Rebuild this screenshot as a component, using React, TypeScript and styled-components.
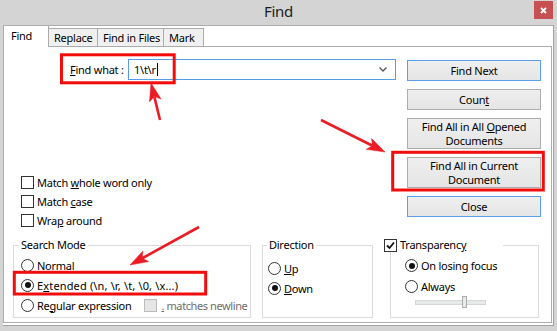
import React from 'react';
import styled, { createGlobalStyle } from 'styled-components';

const GlobalStyle = createGlobalStyle`
    html, body {
        margin: 0;
        padding: 0;
        background: #fff;
    }
    body {
        font-family: "Noto Sans", "Liberation Sans", sans-serif;
        font-size: 11px;
        letter-spacing: -0.25px;
        color: #000;
    }
`;

const Window = styled.div`
    position: relative;
    width: 557px;
    height: 331px;
    box-sizing: border-box;
    padding: 0 3px 5px 3px;
    background: #d4d4d4;
    display: flex;
    flex-direction: column;
    overflow: hidden;
`;

const TitleBar = styled.div`
    height: 25px;
    flex: none;
    display: grid;
    grid-template-columns: 1fr auto 1fr;
`;

const Title = styled.div`
    grid-column: 2;
    margin-top: 2px;
    font-size: 15px;
    line-height: 18px;
    letter-spacing: -0.3px;
    color: #1b1b1b;
`;

const CloseBox = styled.div`
    grid-column: 3;
    justify-self: end;
    margin: 1px 1px 0 0;
    width: 19px;
    height: 18px;
    background: #c75050;
    display: flex;
    align-items: center;
    justify-content: center;
`;

const Client = styled.div`
    flex: 1;
    background: #fff;
    border-top: 1px solid #acacac;
    border-right: 1px solid #a3a3a3;
    border-bottom: 1px solid #a3a3a3;
    padding: 0 1px 2px 0;
    display: flex;
    flex-direction: column;
`;

const TabRow = styled.div`
    height: 20px;
    flex: none;
    display: flex;
    align-items: flex-end;
`;

const Tab = styled.div<{ $active?: boolean; $w: number }>`
    box-sizing: border-box;
    width: ${p => p.$w}px;
    margin-left: ${p => p.$active ? 0 : -1}px;
    height: ${p => p.$active ? 21 : 18}px;
    margin-bottom: ${p => p.$active ? -1 : 0}px;
    padding: 0 0 ${p => p.$active ? 3 : 0}px ${p => p.$active ? 7 : 5}px;
    position: relative;
    z-index: ${p => p.$active ? 2 : 1};
    background: ${p => p.$active ? '#fff' : '#f0f0f0'};
    border: 1px solid #acacac;
    border-top: ${p => p.$active ? 'none' : '1px solid #acacac'};
    border-bottom: none;
    display: flex;
    align-items: center;
    white-space: nowrap;
`;

const Pane = styled.div`
    flex: 1;
    border: 1px solid #acacac;
    display: flex;
    flex-direction: column;
`;

const TopSection = styled.div`
    height: 191px;
    flex: none;
    display: flex;
    justify-content: space-between;
`;

const LeftCol = styled.div`
    display: flex;
    flex-direction: column;
    padding-top: 12px;
`;

const FindRow = styled.div`
    margin-left: 66px;
    display: grid;
    grid-template-columns: 58px 268px;
    align-items: center;
`;

const Combo = styled.div`
    box-sizing: border-box;
    height: 21px;
    border: 1px solid #569de5;
    padding: 0 5px 0 5px;
    display: flex;
    align-items: center;
`;

const Caret = styled.span`
    width: 1px;
    height: 13px;
    margin-left: 1px;
    background: #000;
`;

const Chevron = styled.svg`
    margin-left: auto;
    margin-right: 3px;
`;

const Options = styled.div`
    margin: 93px 0 0 17px;
    display: flex;
    flex-direction: column;
`;

const OptionRow = styled.div<{ $h?: number }>`
    height: ${p => p.$h ?? 19}px;
    display: flex;
    align-items: center;
    gap: 3px;
    white-space: nowrap;
`;

const Wide = styled.span`
    letter-spacing: 0.15px;
`;

const Box = styled.span<{ $disabled?: boolean }>`
    box-sizing: border-box;
    width: 13px;
    height: 13px;
    flex: none;
    border: 1px solid ${p => p.$disabled ? '#bcbcbc' : '#333'};
    background: ${p => p.$disabled ? '#e6e6e6' : '#fff'};
    display: flex;
    align-items: center;
    justify-content: center;
`;

const Radio = styled.span<{ $on?: boolean }>`
    box-sizing: border-box;
    width: 13px;
    height: 13px;
    flex: none;
    border-radius: 50%;
    border: 1px solid #333;
    background: #fff;
    display: flex;
    align-items: center;
    justify-content: center;
    &::after {
        content: '';
        display: ${p => p.$on ? 'block' : 'none'};
        width: 6px;
        height: 6px;
        border-radius: 50%;
        background: #111;
    }
`;

const RightCol = styled.div`
    width: 134px;
    margin-right: 10px;
    padding-top: 13px;
    display: flex;
    flex-direction: column;
    gap: 8px;
`;

const Button = styled.div<{ $default?: boolean; $tall?: boolean }>`
    box-sizing: border-box;
    height: ${p => p.$tall ? 31 : 21}px;
    border: 1px solid ${p => p.$default ? '#5b9fe6' : '#adadad'};
    background: linear-gradient(#efefef, #e5e5e5);
    display: flex;
    align-items: center;
    justify-content: center;
    text-align: center;
    line-height: 14px;
`;

const GroupRow = styled.div`
    display: flex;
    align-items: flex-start;
    padding-left: 9px;
`;

const Group = styled.fieldset<{ $w: number; $gap: number }>`
    box-sizing: border-box;
    width: ${p => p.$w}px;
    height: 80px;
    min-width: 0;
    margin: 0 0 0 ${p => p.$gap}px;
    padding: 0;
    border: 1px solid #dcdcdc;
`;

const Legend = styled.legend<{ $ml: number; $w?: number; $pad?: number }>`
    margin-left: ${p => p.$ml}px;
    ${p => p.$w ? `width: ${p.$w}px;` : ''}
    padding: 0 ${p => p.$pad ?? 2}px;
    line-height: 14px;
    display: flex;
    align-items: center;
    gap: 3px;
    box-sizing: border-box;
`;

const GroupBody = styled.div<{ $pl: number; $pt: number }>`
    padding: ${p => p.$pt}px 0 0 ${p => p.$pl}px;
`;

const DisabledOpt = styled.div`
    margin-left: 10px;
    display: flex;
    align-items: center;
    gap: 4px;
    color: #6d6d6d;
    letter-spacing: -0.4px;
`;

const SliderRow = styled.div`
    margin-left: 10px;
    height: 11px;
    width: 71px;
    display: flex;
    align-items: center;
    position: relative;
`;

const Track = styled.div`
    width: 71px;
    height: 3px;
    background: #e7eaea;
    border: 1px solid #d6d6d6;
`;

const Thumb = styled.div`
    position: absolute;
    left: 47px;
    top: -1px;
    width: 3px;
    height: 10px;
    background: #e7eaea;
    border: 1px solid #acacac;
`;

const Overlay = styled.svg`
    position: absolute;
    left: 0;
    top: 0;
    pointer-events: none;
    z-index: 5;
`;

const Check = () => (
    <svg width="9" height="9" viewBox="0 0 9 9">
        <polyline points="1,4.5 3.5,7 8,1.5" fill="none" stroke="#111" strokeWidth="1.8" />
    </svg>
);

const Arrow: React.FC<{ x1: number; y1: number; x2: number; y2: number }> = ({ x1, y1, x2, y2 }) => {
    const dx = x2 - x1;
    const dy = y2 - y1;
    const len = Math.hypot(dx, dy);
    const ux = dx / len;
    const uy = dy / len;
    const hl = 18;
    const hw = 6;
    const bx = x2 - ux * hl;
    const by = y2 - uy * hl;
    const nx = x2 - ux * (hl - 4);
    const ny = y2 - uy * (hl - 4);
    const pts = [
        `${x2},${y2}`,
        `${bx - uy * hw},${by + ux * hw}`,
        `${nx},${ny}`,
        `${bx + uy * hw},${by - ux * hw}`,
    ].join(' ');
    return (
        <g fill="#ec1c24" stroke="#ec1c24">
            <line x1={x1} y1={y1} x2={nx} y2={ny} strokeWidth="2.6" />
            <polygon points={pts} strokeWidth="0.5" />
        </g>
    );
};

const options = [
    <>Match <u>w</u>hole word only</>,
    <>Match <u>c</u>ase</>,
    <>Wra<u>p</u> around</>,
];

export default function App() {
    return (
        <Window>
            <GlobalStyle />
            <TitleBar>
                <Title>Find</Title>
                <CloseBox>
                    <svg width="7" height="7" viewBox="0 0 7 7">
                        <path d="M1 1 L6 6 M6 1 L1 6" stroke="#fff" strokeWidth="1.8" />
                    </svg>
                </CloseBox>
            </TitleBar>
            <Client>
                <TabRow>
                    <Tab $active $w={46}>Find</Tab>
                    <Tab $w={50}>Replace</Tab>
                    <Tab $w={67}>Find in Files</Tab>
                    <Tab $w={41}>Mark</Tab>
                </TabRow>
                <Pane>
                    <TopSection>
                        <LeftCol>
                            <FindRow>
                                <span><u>F</u>ind what :</span>
                                <Combo>
                                    <span>1\t\r</span>
                                    <Caret />
                                    <Chevron width="8" height="5" viewBox="0 0 8 5">
                                        <polyline points="0.5,0.5 4,4 7.5,0.5" fill="none" stroke="#555" strokeWidth="1.3" />
                                    </Chevron>
                                </Combo>
                            </FindRow>
                            <Options>
                                {options.map((o, i) => (
                                    <OptionRow key={i}>
                                        <Box />
                                        <span>{o}</span>
                                    </OptionRow>
                                ))}
                            </Options>
                        </LeftCol>
                        <RightCol>
                            <Button $default><span>Find Next</span></Button>
                            <Button><span>Coun<u>t</u></span></Button>
                            <Button $tall><span>Find All in All <u>O</u>pened<br />Documents</span></Button>
                            <Button $tall><span>Find All in Current<br />Document</span></Button>
                            <Button $default><span>Close</span></Button>
                        </RightCol>
                    </TopSection>
                    <GroupRow>
                        <Group $w={238} $gap={0}>
                            <Legend $ml={5}>Search Mode</Legend>
                            <GroupBody $pl={7} $pt={3}>
                                <OptionRow $h={20}><Radio /><span>Normal</span></OptionRow>
                                <OptionRow $h={20}><Radio $on /><Wide>E<u>x</u>tended (\n, \r, \t, \0, \x...)</Wide></OptionRow>
                                <OptionRow $h={20}>
                                    <Radio /><span>Re<u>g</u>ular expression</span>
                                    <DisabledOpt>
                                        <Box $disabled />
                                        <span><u>.</u> matches newline</span>
                                    </DisabledOpt>
                                </OptionRow>
                            </GroupBody>
                        </Group>
                        <Group $w={111} $gap={11}>
                            <Legend $ml={4}>Direction</Legend>
                            <GroupBody $pl={5} $pt={6}>
                                <OptionRow $h={20}><Radio /><span><u>U</u>p</span></OptionRow>
                                <OptionRow $h={20}><Radio $on /><span><u>D</u>own</span></OptionRow>
                            </GroupBody>
                        </Group>
                        <Group $w={149} $gap={17}>
                            <Legend $ml={-7} $w={119} $pad={0}>
                                <Box><Check /></Box>
                                <span>Transparenc<u>y</u></span>
                            </Legend>
                            <GroupBody $pl={14} $pt={3}>
                                <OptionRow $h={21}><Radio $on /><span>On losing focus</span></OptionRow>
                                <OptionRow $h={21}><Radio /><span>Always</span></OptionRow>
                                <SliderRow>
                                    <Track />
                                    <Thumb />
                                </SliderRow>
                            </GroupBody>
                        </Group>
                    </GroupRow>
                </Pane>
            </Client>
            <Overlay width="557" height="331">
                <g fill="none" stroke="#f20c0c" strokeWidth="3">
                    <rect x="61.5" y="54.8" width="112.7" height="28" />
                    <rect x="392.7" y="152.3" width="150.6" height="37.7" />
                    <rect x="14.3" y="272.3" width="191.4" height="21.7" />
                </g>
                <Arrow x1={160} y1={120} x2={151} y2={83} />
                <Arrow x1={321} y1={120} x2={385} y2={152} />
                <Arrow x1={199} y1={227} x2={130} y2={265} />
            </Overlay>
        </Window>
    );
}
